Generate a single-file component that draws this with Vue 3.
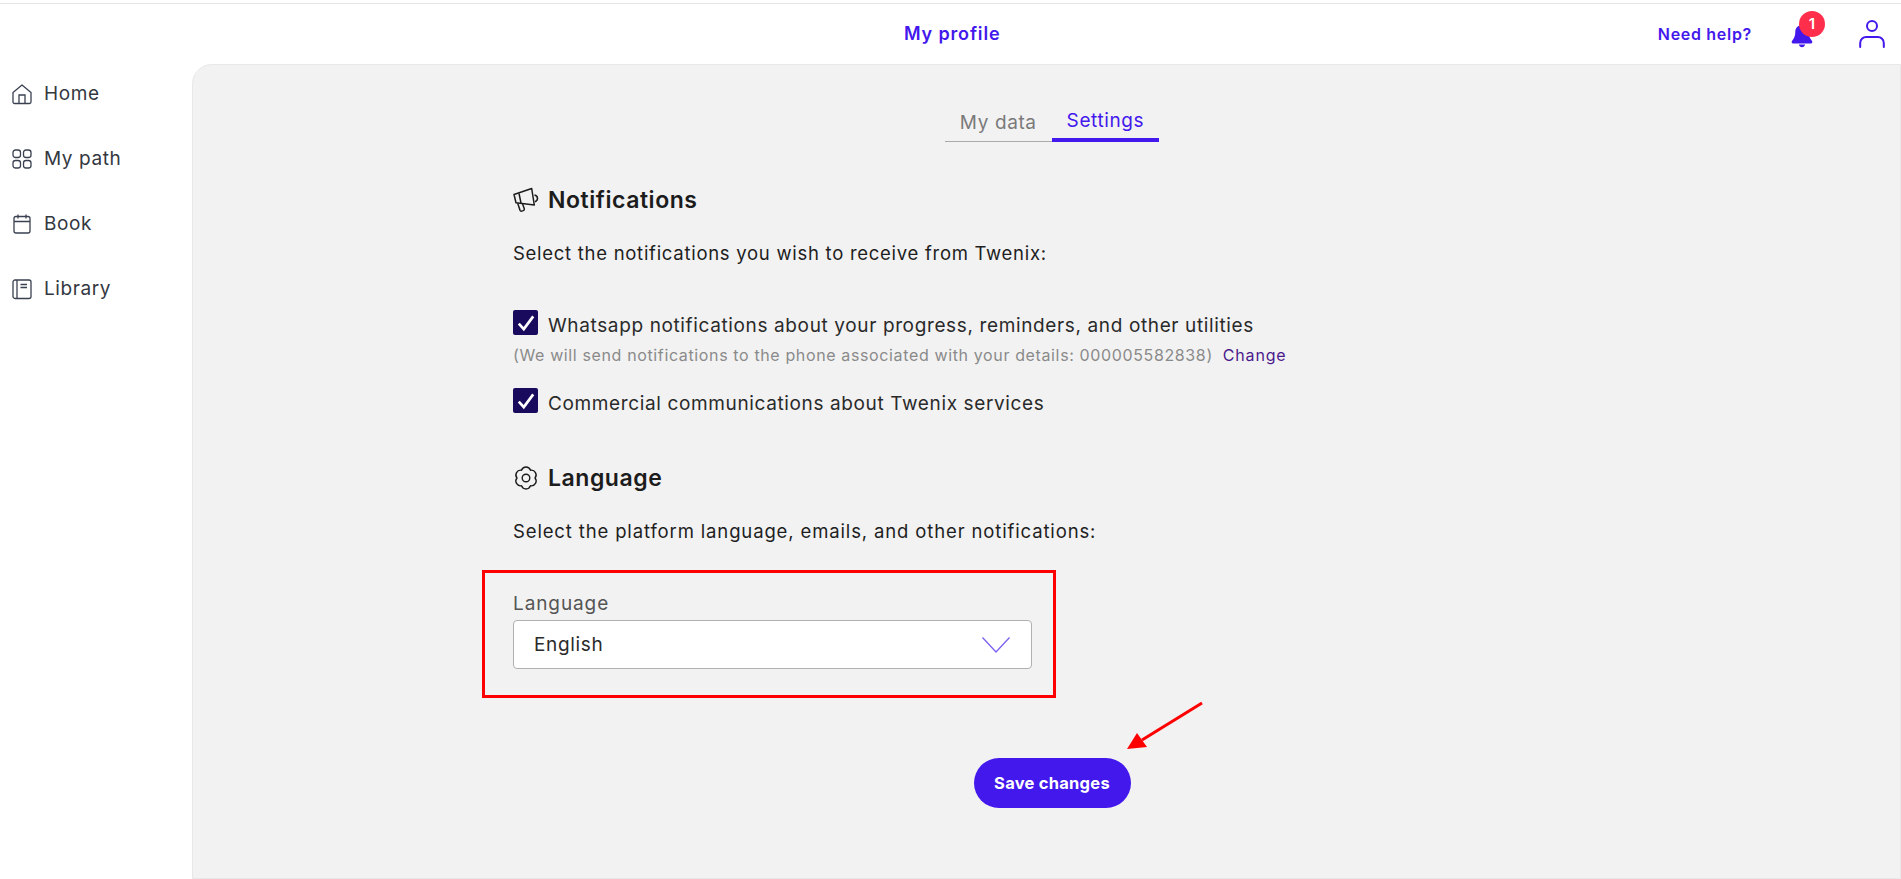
<script setup>
import { ref } from 'vue'

const navItems = [
  { label: 'Home', icon: 'home' },
  { label: 'My path', icon: 'grid' },
  { label: 'Book', icon: 'calendar' },
  { label: 'Library', icon: 'book' }
]

const whatsapp = ref(true)
const commercial = ref(true)
</script>

<template>
  <div class="page">
    <header class="topbar">
      <div class="topbar-title">My profile</div>
      <div class="topbar-actions">
        <a class="help">Need help?</a>
        <span class="bell">
          <svg width="24" height="24" viewBox="0 0 24 24" fill="#4318ec">
            <path d="M12 1C8 1 5.300 4 5.300 8c0 4-1.200 6.500-3.300 9-.8 1-.2 2.400 1 2.400h18c1.200 0 1.800-1.400 1-2.400-2.100-2.500-3.300-5-3.300-9C18.700 4 16 1 12 1z" />
            <path d="M8.800 20.500h6.400c-.4 1.600-1.700 2.700-3.200 2.700s-2.800-1.100-3.200-2.700z" />
          </svg>
          <span class="badge">1</span>
        </span>
        <svg class="user" width="28" height="30" viewBox="0 0 28 30" fill="none" stroke="#4318ec" stroke-width="2">
          <circle cx="14" cy="7" r="5" />
          <path d="M2.200 28v-4a6 6 0 0 1 6-6h11.600a6 6 0 0 1 6 6v4" stroke-linecap="round" />
        </svg>
      </div>
    </header>

    <div class="body">
      <nav class="sidebar">
        <a v-for="item in navItems" :key="item.label" class="nav-item">
          <svg width="22" height="22" viewBox="0 0 22 22" fill="none" stroke="#3a4150" stroke-width="1.300">
            <template v-if="item.icon === 'home'">
              <path d="M2 9.500 11 2l9 7.500V19a1.500 1.500 0 0 1-1.500 1.500h-15A1.500 1.500 0 0 1 2 19z" stroke-linejoin="round" />
              <path d="M8 20.500V12h6v8.500" />
            </template>
            <template v-else-if="item.icon === 'grid'">
              <rect x="2" y="2" width="7.500" height="7.500" rx="2.500" />
              <rect x="12.500" y="2" width="7.500" height="7.500" rx="2.500" />
              <rect x="2" y="12.500" width="7.500" height="7.500" rx="2.500" />
              <rect x="12.500" y="12.500" width="7.500" height="7.500" rx="2.500" />
            </template>
            <template v-else-if="item.icon === 'calendar'">
              <rect x="3" y="3.500" width="16" height="16.500" rx="2" />
              <path d="M3 8.500h16M7 1.500v4M15 1.500v4" />
            </template>
            <template v-else>
              <rect x="2" y="2" width="18" height="18.500" rx="2" />
              <path d="M6 2v18.500M9.500 6.500h6.500M9.500 9.500h6.500" />
            </template>
          </svg>
          <span>{{ item.label }}</span>
        </a>
      </nav>

      <main class="panel">
        <div class="content">
          <div class="tabs">
            <button class="tab">My data</button>
            <button class="tab active">Settings</button>
          </div>

          <section class="section-notif">
            <h2 class="heading">
              <svg width="26" height="26" viewBox="0 0 26 26" fill="none" stroke="#1c1c1c" stroke-width="1.500" stroke-linejoin="round">
                <path d="M1 7.500 18.700 1.500 21.300 18 3 15.700z" />
                <path d="M6 6.300 8 16" />
                <path d="M21.500 8c2 .5 3 1.600 3 3.200s-1 2.900-2.500 3.500" />
                <path d="M4.700 16.300 7 23.200c.3.800 1 1.100 1.800.9l1.500-.5c.8-.3 1.200-1 1-1.800L9.600 17" />
              </svg>
              Notifications
            </h2>
            <p class="lead">Select the notifications you wish to receive from Twenix:</p>

            <label class="check-row first">
              <input v-model="whatsapp" type="checkbox" class="native" />
              <span class="box">
                <svg width="20" height="20" viewBox="0 0 18 18" fill="none" stroke="#fff" stroke-width="2.400"><path d="M2.500 9.500 7 14.500 15.500 3" /></svg>
              </span>
              <span class="check-text">Whatsapp notifications about your progress, reminders, and other utilities</span>
            </label>
            <p class="hint">(We will send notifications to the phone associated with your details: 000005582838)<a class="change">Change</a></p>

            <label class="check-row">
              <input v-model="commercial" type="checkbox" class="native" />
              <span class="box">
                <svg width="20" height="20" viewBox="0 0 18 18" fill="none" stroke="#fff" stroke-width="2.400"><path d="M2.500 9.500 7 14.500 15.500 3" /></svg>
              </span>
              <span class="check-text">Commercial communications about Twenix services</span>
            </label>
          </section>

          <section class="section-lang">
            <h2 class="heading">
              <svg width="26" height="26" viewBox="0 0 26 26" fill="none" stroke="#1c1c1c" stroke-width="1.400" stroke-linejoin="round">
                <path d="M8.500 5.200A4.800 4.800 0 0 1 17.500 5.200 4.800 4.800 0 0 1 22 13 4.800 4.800 0 0 1 17.500 20.800 4.800 4.800 0 0 1 8.500 20.800 4.800 4.800 0 0 1 4 13 4.800 4.800 0 0 1 8.500 5.200z" />
                <circle cx="13" cy="13" r="3.800" />
              </svg>
              Language
            </h2>
            <p class="lead wide">Select the platform language, emails, and other notifications:</p>

            <div class="field">
              <label class="field-label">Language</label>
              <div class="select">
                <span>English</span>
                <svg width="30" height="18" viewBox="0 0 30 18" fill="none" stroke="#7b61f0" stroke-width="1.300"><path d="M1.500 1.500 15 16 28.500 1.500" /></svg>
              </div>
            </div>
          </section>

          <div class="actions">
            <button class="save">Save changes</button>
          </div>
        </div>

        <!-- annotations added on the screenshot -->
        <div class="mark-box"></div>
        <svg class="mark-arrow" width="90" height="60" viewBox="0 0 90 60">
          <path d="M82 8 22 45" stroke="#f00" stroke-width="3" fill="none" />
          <path d="M7 54 17 38 27 52z" fill="#f00" />
        </svg>
      </main>
    </div>
  </div>
</template>

<style>
html, body {
  margin: 0;
  background: #fff;
}
</style>

<style scoped>
.page {
  height: 879px;
  overflow: hidden;
  display: flex;
  flex-direction: column;
  font-family: Inter, "Open Sans", sans-serif;
  color: #1e1e1e;
  padding-top: 3px;
  box-sizing: border-box;
}

.topbar {
  height: 61px;
  flex-shrink: 0;
  position: relative;
  display: flex;
  align-items: center;
  justify-content: flex-end;
  border-top: 1px solid #e4e4e4;
  box-sizing: border-box;
}

.topbar-title {
  position: absolute;
  left: 904px;
  top: 19px;
  color: #4318ec;
  font-size: 18px;
  font-weight: 600;
  letter-spacing: 0.85px;
}

.topbar-actions {
  display: flex;
  align-items: center;
  margin-right: 15px;
}

.help {
  color: #4318ec;
  font-size: 16px;
  font-weight: 600;
  letter-spacing: 0.7px;
  margin-right: 38px;
}

.bell {
  position: relative;
  display: block;
  width: 24px;
  height: 24px;
  margin-top: 4px;
  margin-right: 44px;
}

.bell svg {
  display: block;
}

.badge {
  position: absolute;
  left: 9px;
  top: -13px;
  width: 26px;
  height: 26px;
  border-radius: 50%;
  background: #ff2e4a;
  color: #fff;
  font-size: 15px;
  font-weight: 600;
  text-align: center;
  line-height: 26px;
}

.body {
  flex: 1;
  display: flex;
  min-height: 0;
}

.sidebar {
  width: 192px;
  flex-shrink: 0;
  margin-top: -3px;
}

.nav-item {
  display: flex;
  align-items: center;
  gap: 11px;
  height: 65px;
  padding-left: 11px;
  font-size: 19px;
  letter-spacing: 0.6px;
  color: #33383f;
}

.panel {
  flex: 1;
  position: relative;
  background: #f2f2f2;
  border: 1px solid #e8e8e8;
  border-radius: 20px 0 0 0;
  padding-left: 320px;
  box-sizing: border-box;
}

.content {
  width: 1078px;
}

.tabs {
  display: flex;
  justify-content: center;
  padding-top: 40px;
}

.tab {
  background: none;
  border: none;
  border-bottom: 1px solid #aaa;
  padding: 0 15px 2px;
  height: 37px;
  font-family: inherit;
  font-size: 19px;
  letter-spacing: 0.6px;
  color: #7a7a7a;
}

.tab.active {
  color: #4318ec;
  border-bottom: 4px solid #4318ec;
}

.heading {
  display: flex;
  align-items: center;
  gap: 9px;
  margin: 0;
  height: 28px;
  font-size: 23px;
  font-weight: 600;
  letter-spacing: 0.55px;
  color: #1c1c1c;
}

.section-notif {
  margin-top: 44px;
}

.section-lang {
  margin-top: 49px;
}

.lead {
  margin: 28px 0 0;
  font-size: 18.500px;
  line-height: 22px;
  letter-spacing: 0.72px;
  color: #1e1e1e;
  font-weight: 400;
}

.lead.wide {
  letter-spacing: 0.86px;
}

.check-row {
  display: flex;
  align-items: flex-start;
  gap: 10px;
  position: relative;
  margin-top: 23px;
}

.check-row.first {
  margin-top: 46px;
}

.check-text {
  margin-top: 4px;
  font-size: 19px;
  line-height: 23px;
  letter-spacing: 0.63px;
  color: #2a2a2a;
}

.native {
  position: absolute;
  opacity: 0;
  width: 0;
  height: 0;
}

.box {
  width: 25px;
  height: 25px;
  border-radius: 2px;
  background: #1a0a5e;
  display: flex;
  align-items: center;
  justify-content: center;
  flex-shrink: 0;
}

.hint {
  margin: 9px 0 0;
  font-size: 16px;
  line-height: 19px;
  letter-spacing: 0.63px;
  color: #8a8a8a;
  white-space: nowrap;
}

.change {
  margin-left: 10px;
  color: #4b1a8c;
  letter-spacing: 0.8px;
}

.field {
  width: 519px;
  margin-top: 50px;
}

.field-label {
  display: block;
  font-size: 19px;
  line-height: 23px;
  letter-spacing: 0.9px;
  color: #555;
  margin-bottom: 5px;
}

.select {
  height: 49px;
  box-sizing: border-box;
  background: #fff;
  border: 1px solid #b0b0b0;
  border-radius: 4px;
  display: flex;
  align-items: center;
  justify-content: space-between;
  padding: 0 20px;
  font-size: 19px;
  letter-spacing: 0.65px;
  color: #2a2a2a;
}

.actions {
  display: flex;
  justify-content: center;
  margin-top: 89px;
}

.save {
  width: 157px;
  height: 50px;
  border: none;
  border-radius: 25px;
  background: #4318ec;
  color: #fff;
  font-family: inherit;
  font-size: 16.500px;
  font-weight: 700;
  letter-spacing: 0.25px;
}

.mark-box {
  position: absolute;
  left: 289px;
  top: 505px;
  width: 574px;
  height: 128px;
  box-sizing: border-box;
  border: 3px solid #f00;
}

.mark-arrow {
  position: absolute;
  left: 927px;
  top: 630px;
}
</style>
